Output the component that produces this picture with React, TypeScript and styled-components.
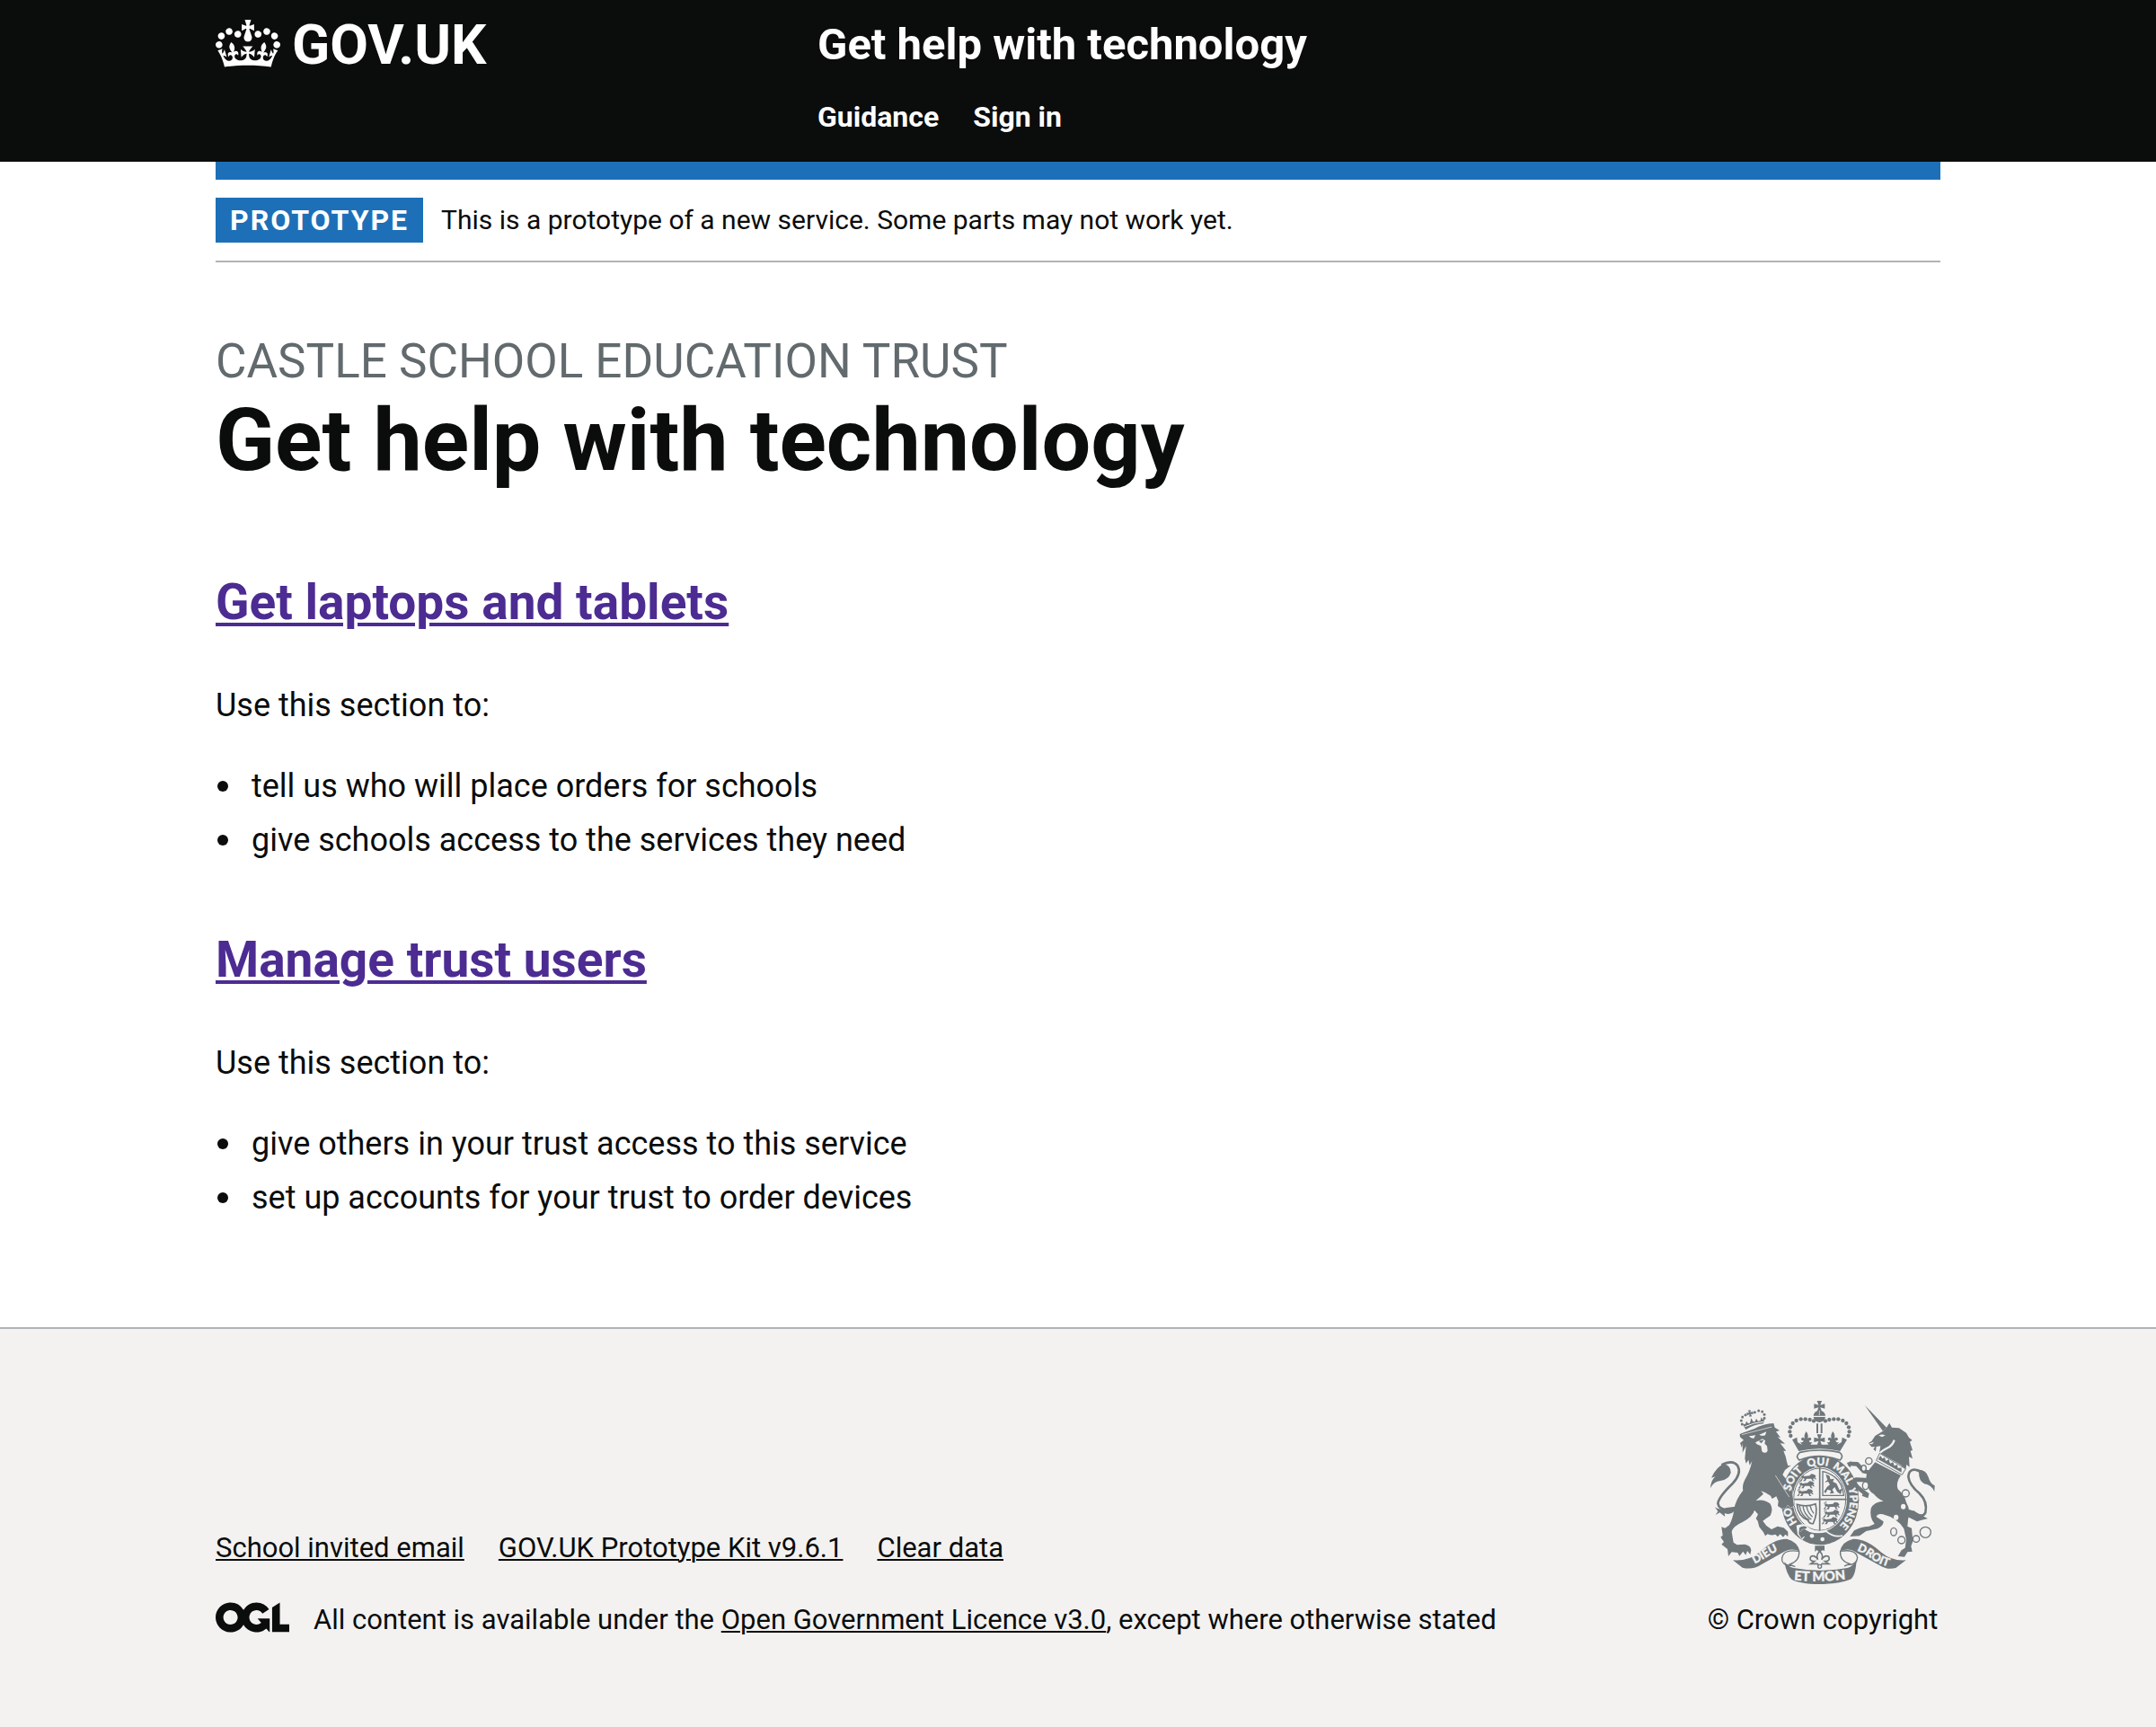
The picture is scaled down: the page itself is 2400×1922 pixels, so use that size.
import styled, { createGlobalStyle } from "styled-components";

const colour = {
  black: "#0b0c0c",
  blue: "#1d70b8",
  border: "#b1b4b6",
  secondary: "#626a6e",
  visited: "#4c2c92",
  footer: "#f3f2f1",
  crest: "#6f777b",
  white: "#ffffff",
};

const GlobalStyle = createGlobalStyle`
  *, *::before, *::after { box-sizing: border-box; }
  body {
    margin: 0;
    background: ${colour.footer};
    color: ${colour.black};
    font-family: Roboto, "Liberation Sans", sans-serif;
    -webkit-font-smoothing: antialiased;
  }
  h1, h2, p, ul { margin: 0; padding: 0; }
`;

const Page = styled.div`
  background: ${colour.white};
`;

const Container = styled.div`
  width: calc(100% - 60px);
  max-width: 1920px;
  margin: 0 auto;
`;

const Header = styled.header`
  background: ${colour.black};
  padding: 22px 0 30px;
`;

const HeaderGrid = styled(Container)`
  display: grid;
  grid-template-columns: calc(100% / 3 + 30px) 1fr;
`;

const LogoLink = styled.a`
  display: inline-flex;
  align-items: flex-start;
  justify-self: start;
  gap: 13px;
  color: ${colour.white};
  text-decoration: none;
  font-size: 62px;
  line-height: 56px;
  font-weight: 700;
`;

const ServiceLink = styled.a`
  display: block;
  color: ${colour.white};
  text-decoration: none;
  font-size: 49px;
  line-height: 56px;
  font-weight: 700;
`;

const Nav = styled.nav`
  display: flex;
  gap: 38px;
  margin-top: 32px;
`;

const NavLink = styled.a`
  color: ${colour.white};
  text-decoration: none;
  font-size: 32px;
  line-height: 40px;
  font-weight: 700;
`;

const BlueBar = styled.div`
  height: 20px;
  background: ${colour.blue};
`;

const PhaseBanner = styled.div`
  display: flex;
  gap: 20px;
  padding: 20px 0;
  border-bottom: 2px solid ${colour.border};
  line-height: 50px;
`;

const PhaseTag = styled.strong`
  padding: 0 16px;
  background: ${colour.blue};
  color: ${colour.white};
  font-size: 32px;
  font-weight: 700;
  letter-spacing: 2px;
  text-transform: uppercase;
`;

const PhaseText = styled.span`
  font-size: 30px;
`;

const Main = styled.main`
  padding: 80px 0 119px;
`;

const Caption = styled.span`
  display: block;
  margin-bottom: 8px;
  color: ${colour.secondary};
  font-size: 53px;
  line-height: 60px;
  text-transform: uppercase;
`;

const Title = styled.h1`
  margin-bottom: 100px;
  font-size: 97px;
  line-height: 100px;
  font-weight: 700;
`;

const Sections = styled.div`
  display: flex;
  flex-direction: column;
  gap: 78px;
`;

const SectionTitle = styled.h2`
  margin-bottom: 60px;
  font-size: 55px;
  line-height: 60px;
  font-weight: 700;
`;

const SectionLink = styled.a`
  color: ${colour.visited};
  text-decoration: underline;
  text-decoration-thickness: 4px;
  text-underline-offset: 4px;
`;

const Body = styled.p`
  margin-bottom: 40px;
  font-size: 36px;
  line-height: 50px;
`;

const BulletList = styled.ul`
  display: flex;
  flex-direction: column;
  gap: 10px;
  list-style: none;
`;

const Bullet = styled.li`
  display: flex;
  align-items: center;
  gap: 26px;
  padding-left: 2px;
  font-size: 36px;
  line-height: 50px;

  &::before {
    content: "";
    width: 12px;
    height: 12px;
    border-radius: 50%;
    background: ${colour.black};
  }
`;

const Footer = styled.footer`
  padding: 80px 0 100px;
  border-top: 2px solid ${colour.border};
  background: ${colour.footer};
  font-size: 31px;
  line-height: 40px;
`;

const FooterRow = styled(Container)`
  display: flex;
  align-items: flex-end;
  justify-content: space-between;
  gap: 60px;
`;

const FooterMeta = styled.div`
  display: flex;
  flex-direction: column;
  gap: 40px;
`;

const FooterLinks = styled.div`
  display: flex;
  flex-wrap: wrap;
  gap: 0 38px;
`;

const FooterLink = styled.a`
  color: ${colour.black};
  text-decoration: underline;
  text-decoration-thickness: 2px;
  text-underline-offset: 2px;
`;

const Licence = styled.div`
  display: flex;
  align-items: flex-start;
  gap: 27px;
`;

const CopyrightLink = styled.a`
  display: flex;
  flex-direction: column;
  align-items: center;
  gap: 20px;
  min-width: 262px;
  color: ${colour.black};
  text-decoration: none;
  white-space: nowrap;
`;

const Drawing = styled.svg`
  display: block;
  flex: none;
`;

const CrestLetters = styled.text<{ $size: number }>`
  fill: ${colour.footer};
  stroke: ${colour.footer};
  stroke-width: 1px;
  font-family: Lato, "Liberation Sans", sans-serif;
  font-weight: 900;
  font-size: ${(p) => p.$size}px;
  text-anchor: middle;
`;

function Crown() {
  return (
    <Drawing width="72" height="53" viewBox="0 0 132 97" aria-hidden="true">
      <path
        fill="currentColor"
        fillRule="evenodd"
        d="M25 30.2c3.5 1.5 7.7-.2 9.1-3.7 1.5-3.6-.2-7.8-3.9-9.2-3.6-1.4-7.6.3-9.1 3.9-1.4 3.5.3 7.5 3.9 9zM9 39.5c3.6 1.5 7.8-.2 9.2-3.7 1.5-3.6-.2-7.8-3.9-9.1-3.6-1.5-7.6.2-9.1 3.8-1.4 3.5.3 7.5 3.8 9zM4.4 57.2c3.5 1.5 7.7-.2 9.1-3.8 1.5-3.6-.2-7.7-3.9-9.1-3.5-1.5-7.6.3-9.1 3.8-1.4 3.5.3 7.6 3.9 9.1zm38.3-21.4c3.5 1.5 7.7-.2 9.1-3.8 1.5-3.6-.2-7.7-3.9-9.1-3.6-1.5-7.6.3-9.1 3.8-1.3 3.6.4 7.7 3.9 9.1zm64.4-5.6c-3.6 1.5-7.8-.2-9.1-3.7-1.5-3.6.2-7.8 3.8-9.2 3.6-1.4 7.7.3 9.2 3.9 1.3 3.5-.4 7.5-3.9 9zm15.9 9.3c-3.6 1.5-7.7-.2-9.1-3.7-1.5-3.6.2-7.8 3.7-9.1 3.6-1.5 7.7.2 9.2 3.8 1.5 3.5-.3 7.5-3.8 9zm4.7 17.7c-3.6 1.5-7.8-.2-9.2-3.8-1.5-3.6.2-7.7 3.9-9.1 3.6-1.5 7.7.3 9.2 3.8 1.3 3.5-.4 7.6-3.9 9.1zM89.3 35.8c-3.6 1.5-7.8-.2-9.2-3.8-1.4-3.6.2-7.7 3.9-9.1 3.6-1.5 7.7.3 9.2 3.8 1.4 3.6-.3 7.7-3.9 9.1zM69.7 17.7l8.9 4.7V9.3l-8.9 2.8c-.2-.3-.5-.6-.9-.9L72.4 0H59.6l3.5 11.2c-.3.3-.6.5-.9.9l-8.8-2.8v13.1l8.8-4.7c.3.3.6.7.9.9l-5 15.4v.1c-.2.8-.4 1.6-.4 2.4 0 4.1 3.1 7.5 7 8.1h.2c.3 0 .7.1 1 .1.4 0 .7 0 1-.1h.2c4-.6 7.1-4.1 7.1-8.1 0-.8-.1-1.7-.4-2.4V34l-5.1-15.4c.4-.2.7-.6 1-.9zM66 92.8c16.9 0 32.8 1.1 47.1 3.2 4-16.9 8.9-26.7 14-33.5l-9.6-3.4c1 4.9 1.1 7.2 0 10.2-1.5-1.4-3-4.3-4.2-8.7L108.6 76c2.8-2 5-3.2 7.5-3.3-4.4 9.4-10 11.9-13.6 11.2-4.3-.8-6.3-4.6-5.6-7.9 1-4.7 5.7-5.9 8-.5 4.3-8.7-3-11.4-7.6-8.8 7.1-7.2 7.9-13.5 2.1-21.1-8 6.1-8.1 12.3-4.5 20.8-4.7-5.4-12.1-2.5-9.5 6.2 3.4-5.2 7.9-2 7.2 3.1-.6 4.3-6.4 7.8-13.5 7.2-10.3-.9-10.9-8-11.2-13.8 2.5-.5 7.1 1.8 11 7.3L80.2 60c-4.1 4.4-8 5.3-12.3 5.4 1.4-4.4 8-11.6 8-11.6H55.5s6.4 7.2 7.9 11.6c-4.2-.1-8-1-12.3-5.4l1.4 16.4c3.9-5.5 8.5-7.7 10.9-7.3-.3 5.8-.9 12.8-11.1 13.8-7.2.6-12.9-2.9-13.5-7.2-.7-5 3.8-8.3 7.1-3.1 2.7-8.7-4.6-11.6-9.4-6.2 3.7-8.5 3.6-14.7-4.6-20.8-5.8 7.6-5 13.9 2.2 21.1-4.7-2.6-11.9.1-7.7 8.8 2.3-5.5 7.1-4.2 8.1.5.7 3.3-1.3 7.1-5.7 7.9-3.5.7-9-1.8-13.5-11.2 2.5.1 4.7 1.3 7.5 3.3l-4.7-15.4c-1.2 4.4-2.7 7.2-4.3 8.7-1.1-3-.9-5.3 0-10.2l-9.5 3.4c5 6.9 9.9 16.7 14 33.5 14.8-2.1 30.8-3.2 47.7-3.2z"
      />
    </Drawing>
  );
}

function LicenceLogo() {
  return (
    <Drawing width="82" height="34" viewBox="0 0 483.2 195.7" role="img" aria-label="OGL">
      <path
        fill="currentColor"
        d="M421.5 142.8V.1l-50.7 32.3v161.1h112.4v-50.7zm-122.3-9.6A47.12 47.12 0 0 1 221 97.8c0-26 21.1-47.1 47.1-47.1 16.7 0 31.4 8.7 39.7 21.8l42.7-27.2A97.63 97.63 0 0 0 268.1 0c-36.5 0-68.3 20.1-85.1 49.7A98 98 0 0 0 97.8 0C43.9 0 0 43.9 0 97.8s43.9 97.8 97.8 97.8c36.5 0 68.3-20.1 85.1-49.7a97.76 97.76 0 0 0 149.6 25.4l19.4 22.2h3v-87.8h-80l24.3 27.5zM97.8 145c-26 0-47.1-21.1-47.1-47.1s21.1-47.1 47.1-47.1 47.1 21.1 47.1 47.1S123.8 145 97.8 145"
      />
    </Drawing>
  );
}

const crownPearls = [
  [418, 121], [405, 117], [390, 115], [375, 115], [360, 120], [348, 129], [340, 142], [338, 157], [341, 171],
];
const lionPearls = [
  [179, 132], [176, 120], [180, 108], [190, 101], [221, 92], [234, 87], [246, 90], [253, 100], [253, 112],
];

function Crest() {
  const g = colour.crest;
  const b = colour.footer;
  return (
    <Drawing width="250" height="204" viewBox="73 54 750 612" role="img" aria-label="Royal coat of arms">
      <defs>
        <path id="garter" d="M438 497C381 497 338 446 338 383C338 320 381 269 438 269C495 269 539 320 539 383C539 446 495 497 438 497" />
        <path id="scroll-left" d="M196 610Q240 590 266 572Q290 556 330 543" />
        <path id="scroll-mid" d="M335 651Q437 662 542 648" />
        <path id="scroll-right" d="M540 547Q580 558 606 578Q640 604 695 614" />
        <g id="fleur">
          <path d="M0 -22Q-9 -10 -5 2Q-14 -6 -17 3Q-17 10 -10 8Q-8 16 -20 14L-12 26H12L20 14Q8 16 10 8Q17 10 17 3Q14 -6 5 2Q9 -10 0 -22Z" />
        </g>
        <path id="cross" d="M-8 -18H8L3 -4L18 -8V8L3 4L8 18H-8L-3 4L-18 8V-8L-3 -4Z" />
        <path id="passant" d="M0 8L6 2L10 6L28 4L34 -2L44 0L50 6L46 10L52 16L46 16L42 11L40 18L46 22H38L34 14L18 14L14 22H6L12 15L6 12L2 22H-4L3 13L-2 2L4 -4L8 -2L2 1Z" />
      </defs>

      {/* Garter and shield */}
      <ellipse cx="439" cy="385" rx="130" ry="150" fill={g} />
      <ellipse cx="438" cy="383" rx="91" ry="108" fill={b} />
      <ellipse cx="438" cy="383" rx="87" ry="104" fill="none" stroke={g} strokeWidth="3" />
      <path d="M438 275V490M348 383H528" stroke={g} strokeWidth="5" />
      <path d="M448 290V370H518Q512 304 448 290Z" fill="none" stroke={g} strokeWidth="4" />
      <path
        fill={g}
        d="M458 300L470 304L474 316L486 314L482 324L494 330L504 352L514 346L508 366L496 358L488 342L480 350L486 362L472 364L476 354L464 350L458 362L452 358L462 342L472 334L466 324L454 326L464 318Z"
      />
      <g fill={g}>
        <use href="#passant" x="376" y="300" />
        <use href="#passant" x="370" y="324" />
        <use href="#passant" x="366" y="350" />
        <use href="#passant" x="454" y="394" />
        <use href="#passant" x="454" y="420" />
        <use href="#passant" x="448" y="444" />
      </g>
      <path fill="none" stroke={g} strokeWidth="5" d="M362 400Q392 410 424 398Q432 430 416 464Q404 466 398 452Q366 440 362 400Z" />
      <path fill="none" stroke={g} strokeWidth="4" d="M370 404Q376 440 404 452M382 406Q386 434 410 450M394 406Q398 428 414 442M406 404Q408 418 418 430" />

      {/* Lion's crown */}
      <g fill={g}>
        {lionPearls.map(([x, y]) => <circle key={x * 1000 + y} cx={x} cy={y} r="4.5" />)}
        <use href="#cross" transform="translate(205 96) rotate(-12) scale(.6)" />
        <path d="M181 133L190 131L193 122L199 129L205 128L209 112L216 124L222 123L226 113L232 122L240 120L242 109L247 116L254 113L250 130Q220 132 191 150Z" />
      </g>
      <path d="M188 140Q218 126 251 124" fill="none" stroke={b} strokeWidth="3" />

      {/* Lion */}
      <g transform="translate(60 45)">
        <path
          fill={g}
          stroke={b}
          strokeWidth="3"
          paintOrder="stroke"
          d="M112 130L111 120L124 115L160 102Q190 86 224 84L228 98L244 108L232 112L247 132L237 130L262 152L246 151L266 176L257 176Q266 196 268 212L272 226L282 224L262 240L254 256Q275 280 284 300L292 360L280 366L271 357L262 368L250 368L238 360L240 344L233 328L219 336L214 326Q196 314 182 310L190 320L165 342Q192 336 212 352Q224 370 213 392Q198 402 188 410L200 426L217 438L237 428L258 433L272 446L272 462L263 455L256 464L246 454L238 463L230 455Q215 460 204 454L196 460L190 448L176 430L171 410L165 402L172 388L160 374Q155 395 120 414Q88 428 84 446L90 482L102 490L128 488Q148 492 149 508L146 522L136 510L131 524L122 512L110 527L104 516L84 514L73 528L70 504L50 488L58 480L47 464L54 458L50 430L62 434L76 424Q88 402 92 372Q96 340 122 308Q118 292 128 272Q145 245 152 210L144 224L140 206L132 218L128 202L132 160L120 182L121 150L118 166L112 150L124 140Z"
        />
        <path fill="none" stroke={g} strokeWidth="8" d="M50 223Q88 204 104 226Q118 250 88 284Q40 330 38 352Q42 376 80 372" />
        <path fill={g} d="M12 302Q16 272 30 262L16 266Q34 228 58 220Q82 226 81 250Q74 272 46 276Q24 278 12 302ZM28 364Q46 376 66 366L96 362L94 376Q80 392 60 384L62 396L44 382L30 390L38 378Z" />
        <path fill={b} d="M142 127L164 124L158 134Q148 136 142 127ZM176 122L200 112L196 124Q186 128 176 122ZM163 148L188 136L196 142L194 152L202 160L204 176Q196 188 185 178L182 160L168 154Z" />
        <path fill={g} d="M174 143L192 139L183 151Z" />
        <path fill="none" stroke={b} strokeWidth="2" d="M118 122Q170 108 218 96M230 258L276 330" />
      </g>

      <CrestLetters $size={36}><textPath href="#garter" startOffset="17%">HO</textPath></CrestLetters>
      <CrestLetters $size={36}><textPath href="#garter" startOffset="35%">SOIT</textPath></CrestLetters>
      <CrestLetters $size={36}><textPath href="#garter" startOffset="49%">QUI</textPath></CrestLetters>
      <CrestLetters $size={36}><textPath href="#garter" startOffset="62%">MAL</textPath></CrestLetters>
      <CrestLetters $size={36}><textPath href="#garter" startOffset="71%">Y</textPath></CrestLetters>
      <CrestLetters $size={36}><textPath href="#garter" startOffset="81%">PENSE</textPath></CrestLetters>

      {/* Buckle */}
      <path fill={b} d="M360 470Q378 462 392 468L404 480Q430 494 462 484L462 492Q430 500 404 492L386 482Q372 484 376 500L388 508L380 518L364 500Z" />
      <path fill={g} d="M370 478Q382 468 396 476L390 482Q378 480 374 490L386 506L378 514L368 498Z" />
      <path fill="none" stroke={b} strokeWidth="5" d="M458 488Q484 512 514 504" />
      <circle cx="412" cy="505" r="7" fill={b} />
      <circle cx="447" cy="516" r="7" fill={b} />

      {/* Royal crown */}
      <g fill={g}>
        {crownPearls.map(([x, y]) => (
          <g key={x}>
            <circle cx={x} cy={y} r="6.5" />
            <circle cx={875 - x} cy={y} r="6.5" />
          </g>
        ))}
        <use href="#cross" x="437" y="72" />
        <path d="M417 104A20 18 0 0 1 457 104ZM417 108H457Q454 124 437 126Q420 124 417 108Z" />
        <path d="M427 130H433V162H427ZM441 130H447V162H441Z" />
        <use href="#fleur" x="393" y="178" />
        <use href="#fleur" x="482" y="178" />
        <use href="#cross" x="437" y="184" />
        <path d="M346 184L362 176L364 192L378 200H496L511 192L513 176L529 184L506 222Q437 206 368 222Z" />
      </g>
      <path d="M437 86V102" stroke={b} strokeWidth="2" />
      <path d="M372 226Q437 212 504 226Q520 238 506 252Q437 226 370 252Q354 240 372 226Z" fill={b} stroke={g} strokeWidth="5" />

      {/* Unicorn */}
      <g transform="translate(435 45)">
        <path fill={g} d="M153 23L226 98L214 110Z" />
        <path
          fill={g}
          d="M214 110L226 98L236 83L244 98L268 100L292 116L301 132L312 140L304 146L313 174L306 176L313 202L301 196L303 230L293 222L290 238L272 222L202 182L206 160L192 162L190 178L182 170L188 163L176 163L166 150L176 144L188 126Z"
        />
        <path fill={b} d="M200 125Q210 118 222 124L212 130ZM166 152L184 146L178 154Z" />
        <path fill="none" stroke={b} strokeWidth="7" d="M196 196Q204 178 226 168Q246 160 252 140" />
        <path fill={b} stroke={g} strokeWidth="3" d="M203 184L290 236L278 256L192 208Z" />
        <path fill={g} d="M198 204L206 192L212 202L220 198L224 210L234 204L238 218L248 214L252 226L262 222L264 234L276 232L276 248Z" />
        <path
          fill={g}
          d="M188 214L274 258Q256 282 264 304Q288 326 292 348Q308 376 298 406L296 428L310 434L314 478L308 494L312 512L296 514L286 530L264 528L276 508L288 500L292 472L284 436Q262 400 214 388Q196 384 192 396L216 412Q216 426 196 436L158 444L136 460L104 462L118 442Q136 430 168 428L186 420Q168 396 174 368Q184 346 216 344Q196 336 184 320Q162 308 164 284Q150 260 170 236Z"
        />
        <path fill="none" stroke={g} strokeWidth="14" strokeLinejoin="round" d="M174 250L150 244L128 220L104 219M172 274L124 272Q112 278 130 298L160 322" />
        <path fill={g} d="M94 216L108 211L106 232L98 226ZM152 310L168 318L164 334L144 326Z" />
        <path fill="none" stroke={g} strokeWidth="8" d="M344 246Q302 226 299 262Q302 290 336 318Q364 346 356 382Q346 404 314 378" />
        <path fill={g} d="M320 240Q358 234 366 264Q372 286 387 292L386 312Q376 290 352 286Q334 276 334 248ZM294 370L314 376L352 396L364 402L340 408L328 412Q308 402 292 394Z" />
        <g fill={b} stroke={g} strokeWidth="4">
          <circle cx="167" cy="210" r="11" />
          <ellipse cx="150" cy="234" rx="8" ry="10" />
          <ellipse cx="156" cy="292" rx="10" ry="13" />
          <circle cx="290" cy="318" r="12" />
          <ellipse cx="250" cy="446" rx="10" ry="13" />
          <circle cx="276" cy="474" r="12" />
          <circle cx="325" cy="470" r="11" />
          <circle cx="356" cy="448" r="18" />
        </g>
        <ellipse cx="282" cy="362" rx="8" ry="9" fill={b} />
        <ellipse cx="258" cy="398" rx="8" ry="9" fill={b} />
      </g>

      {/* Pendant */}
      <path fill={g} d="M422 538H454V556L448 552L438 560L428 552L422 558Z" />
      <path fill="none" stroke={g} strokeWidth="5" d="M438 556Q424 570 432 584Q420 566 408 574Q402 590 420 590L408 598H430L438 606L446 598H468L456 590Q474 590 468 574Q456 566 444 584Q452 570 438 556Z" />
      <circle cx="438" cy="607" r="6" fill={b} stroke={g} strokeWidth="4" />

      {/* Motto scroll */}
      <path fill={g} d="M148 586Q200 590 236 560Q286 514 328 515Q364 524 371 556Q340 542 312 562L244 600Q214 620 180 611Z" />
      <path fill={g} d="M726 586Q680 590 644 560Q594 514 550 515Q512 524 506 556Q538 542 562 562L636 602Q664 620 692 612Z" />
      <path fill={b} stroke={g} strokeWidth="4" d="M369 556Q372 588 338 600Q366 612 346 604Q310 604 312 580Q316 548 369 556Z" />
      <path fill={b} stroke={g} strokeWidth="4" d="M507 556Q504 588 538 598Q510 610 530 602Q562 602 564 578Q560 548 507 556Z" />
      <path fill={g} d="M320 592Q336 610 350 612Q437 628 530 612Q548 608 561 584Q558 640 540 650Q500 666 437 666Q370 665 344 650Q328 636 320 592Z" />
      <CrestLetters $size={38}><textPath href="#scroll-left" startOffset="48%">DIEU</textPath></CrestLetters>
      <CrestLetters $size={44}><textPath href="#scroll-mid" startOffset="50%">ET MON</textPath></CrestLetters>
      <CrestLetters $size={38}><textPath href="#scroll-right" startOffset="48%">DROIT</textPath></CrestLetters>
    </Drawing>
  );
}

function Section({ title, items }: { title: string; items: string[] }) {
  return (
    <section>
      <SectionTitle>
        <SectionLink href="#">{title}</SectionLink>
      </SectionTitle>
      <Body>Use this section to:</Body>
      <BulletList>
        {items.map((item) => (
          <Bullet key={item}>{item}</Bullet>
        ))}
      </BulletList>
    </section>
  );
}

export default function App() {
  return (
    <Page>
      <GlobalStyle />
      <Header>
        <HeaderGrid>
          <LogoLink href="#">
            <Crown />
            <span>GOV.UK</span>
          </LogoLink>
          <div>
            <ServiceLink href="#">Get help with technology</ServiceLink>
            <Nav>
              <NavLink href="#">Guidance</NavLink>
              <NavLink href="#">Sign in</NavLink>
            </Nav>
          </div>
        </HeaderGrid>
      </Header>
      <Container>
        <BlueBar />
        <PhaseBanner>
          <PhaseTag>Prototype</PhaseTag>
          <PhaseText>This is a prototype of a new service. Some parts may not work yet.</PhaseText>
        </PhaseBanner>
        <Main>
          <Caption>Castle School Education Trust</Caption>
          <Title>Get help with technology</Title>
          <Sections>
            <Section
              title="Get laptops and tablets"
              items={["tell us who will place orders for schools", "give schools access to the services they need"]}
            />
            <Section
              title="Manage trust users"
              items={["give others in your trust access to this service", "set up accounts for your trust to order devices"]}
            />
          </Sections>
        </Main>
      </Container>
      <Footer>
        <FooterRow>
          <FooterMeta>
            <FooterLinks>
              <FooterLink href="#">School invited email</FooterLink>
              <FooterLink href="#">GOV.UK Prototype Kit v9.6.1</FooterLink>
              <FooterLink href="#">Clear data</FooterLink>
            </FooterLinks>
            <Licence>
              <LicenceLogo />
              <span>
                All content is available under the <FooterLink href="#">Open Government Licence v3.0</FooterLink>, except
                where otherwise stated
              </span>
            </Licence>
          </FooterMeta>
          <CopyrightLink href="#">
            <Crest />
            <span>© Crown copyright</span>
          </CopyrightLink>
        </FooterRow>
      </Footer>
    </Page>
  );
}
